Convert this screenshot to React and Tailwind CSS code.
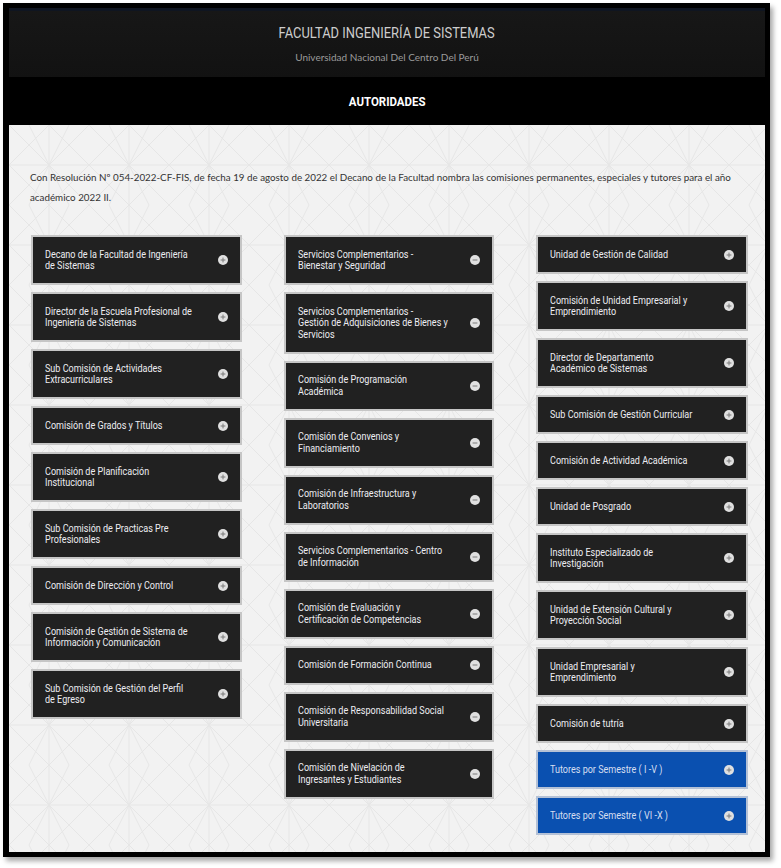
import React from "react";

const col1 = [
  ["Decano de la Facultad de Ingeniería", "de Sistemas"],
  ["Director de la Escuela Profesional de", "Ingeniería de Sistemas"],
  ["Sub Comisión de Actividades", "Extracurriculares"],
  ["Comisión de Grados y Títulos"],
  ["Comisión de Planificación", "Institucional"],
  ["Sub Comisión de Practicas Pre", "Profesionales"],
  ["Comisión de Dirección y Control"],
  ["Comisión de Gestión de Sistema de", "Información y Comunicación"],
  ["Sub Comisión de Gestión del Perfil", "de Egreso"],
];

const col2 = [
  ["Servicios Complementarios -", "Bienestar y Seguridad"],
  ["Servicios Complementarios -", "Gestión de Adquisiciones de Bienes y", "Servicios"],
  ["Comisión de Programación", "Académica"],
  ["Comisión de Convenios y", "Financiamiento"],
  ["Comisión de Infraestructura y", "Laboratorios"],
  ["Servicios Complementarios - Centro", "de Información"],
  ["Comisión de Evaluación y", "Certificación de Competencias"],
  ["Comisión de Formación Continua"],
  ["Comisión de Responsabilidad Social", "Universitaria"],
  ["Comisión de Nivelación de", "Ingresantes y Estudiantes"],
];

const col3 = [
  ["Unidad de Gestión de Calidad"],
  ["Comisión de Unidad Empresarial y", "Emprendimiento"],
  ["Director de Departamento", "Académico de Sistemas"],
  ["Sub Comisión de Gestión Curricular"],
  ["Comisión de Actividad Académica"],
  ["Unidad de Posgrado"],
  ["Instituto Especializado de", "Investigación"],
  ["Unidad de Extensión Cultural y", "Proyección Social"],
  ["Unidad Empresarial y", "Emprendimiento"],
  ["Comisión de tutría"],
];

const blue = [["Tutores por Semestre ( I -V )"], ["Tutores por Semestre ( VI -X )"]];

function Icon({ minus }) {
  return (
    <svg width="10" height="10" viewBox="0 0 10 10" className="shrink-0">
      <circle cx="5" cy="5" r="5" fill="#e0e0e0" />
      <path d="M2.6 5h4.8" stroke="#7a7a7a" strokeWidth="1" />
      {!minus && <path d="M5 2.6v4.8" stroke="#7a7a7a" strokeWidth="1" />}
    </svg>
  );
}

function Card({ lines, minus, isBlue }) {
  return (
    <div
      className={
        "flex items-center min-h-[39px] border-2 pl-[12px] pr-[12px] py-[11.5px] " +
        (isBlue
          ? "bg-[#0a50b0] border-[#b4c1d6] text-[#d6dff0]"
          : "bg-[#212121] border-[#c6c6c6] text-[#ededf2]")
      }
    >
      <div className="flex-1 min-w-0">
        <div className="origin-left scale-x-[0.86] text-[10.5px] leading-[11.5px] [font-family:Roboto,sans-serif]">
          {lines.map((l, i) => (
            <div key={i} className="whitespace-nowrap">
              {l}
            </div>
          ))}
        </div>
      </div>
      <Icon minus={minus} />
    </div>
  );
}

export default function App() {
  return (
    <div className="min-h-[868px] bg-white">
      <div className="ml-[3px] mt-[3px] w-[767px] border-black border-t-[5px] border-l-[6px] border-r-[5px] border-b-[5px] shadow-[3px_4px_5px_rgba(0,0,0,0.35)]">
        <header className="h-[69px] bg-[linear-gradient(180deg,#171717,#121212)] border-t-[3px] border-[#0f1521] flex flex-col items-center">
          <div className="mt-[13px] text-[15px] leading-[18px] text-[#cdcdcd] scale-x-[0.86] [font-family:Roboto,sans-serif]">
            FACULTAD INGENIERÍA DE SISTEMAS
          </div>
          <div className="mt-[9px] text-[10px] leading-[12px] text-[#9b9b9b] [font-family:Lato,sans-serif]">
            Universidad Nacional Del Centro Del Perú
          </div>
        </header>
        <div className="h-[48px] bg-black flex items-center justify-center">
          <div className="text-white text-[13.5px] font-bold scale-x-[0.85] [font-family:Roboto,sans-serif]">
            AUTORIDADES
          </div>
        </div>
        <main className="h-[727px] bg-[#f2f2f2] bg-[url('data:image/svg+xml,%3Csvg%20xmlns=%22http://www.w3.org/2000/svg%22%20width=%2280%22%20height=%2280%22%3E%3Cpath%20d=%22M0%200L80%2080M80%200L0%2080M40%200L80%2040L40%2080L0%2040ZM40%200V80M0%2040H80M20%200L60%2080M60%200L20%2080%22%20fill=%22none%22%20stroke=%22%23e6e6e6%22%20stroke-width=%221%22/%3E%3C/svg%3E')] pt-[42px] pl-[22px] pr-[17px]">
          <p className="ml-[-1px] text-[9.8px] leading-[20px] text-[#333] [font-family:Lato,sans-serif]">
            Con Resolución Nº 054-2022-CF-FIS, de fecha 19 de agosto de 2022 el Decano de la Facultad nombra las comisiones permanentes, especiales y tutores para el año
            <br />
            académico 2022 II.
          </p>
          <div className="mt-[28px] grid grid-cols-[211px_210px_212px] gap-x-[42px] items-start">
            <div className="flex flex-col gap-[7px]">
              {col1.map((l, i) => (
                <Card key={i} lines={l} />
              ))}
            </div>
            <div className="flex flex-col gap-[7px]">
              {col2.map((l, i) => (
                <Card key={i} lines={l} minus />
              ))}
            </div>
            <div className="flex flex-col gap-[7px]">
              {col3.map((l, i) => (
                <Card key={i} lines={l} />
              ))}
              {blue.map((l, i) => (
                <Card key={"b" + i} lines={l} isBlue />
              ))}
            </div>
          </div>
        </main>
      </div>
    </div>
  );
}
